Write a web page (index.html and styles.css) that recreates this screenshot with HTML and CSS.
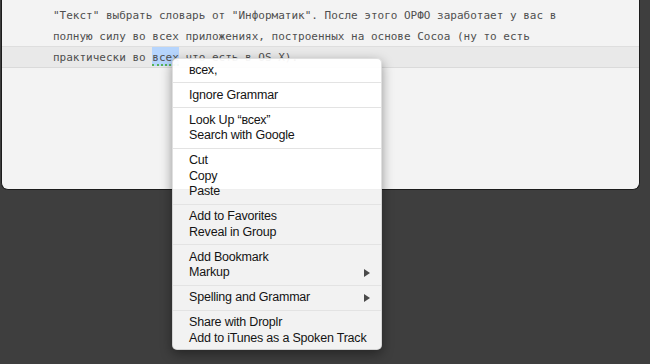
FILE: index.html
```html
<!DOCTYPE html>
<html lang="ru">
<head>
<meta charset="utf-8">
<link rel="stylesheet" href="styles.css">
</head>
<body>
<div class="window">
  <div class="doc">
    <div class="line">Чтобы это сделать, нужно в Системных настройках на вкладке "Язык и Текст"</div>
    <div class="line">"Текст" выбрать словарь от "Информатик". После этого ОРФО заработает у вас в</div>
    <div class="line">полную силу во всех приложениях, построенных на основе Cocoa (ну то есть</div>
    <div class="line current">практически во <span class="sel">всех</span> что есть в OS X).</div>
  </div>
</div>
<div class="menu">
  <div class="item">всех,</div>
  <div class="sep"></div>
  <div class="item">Ignore Grammar</div>
  <div class="sep"></div>
  <div class="item">Look Up “всех”</div>
  <div class="item">Search with Google</div>
  <div class="sep"></div>
  <div class="item">Cut</div>
  <div class="item">Copy</div>
  <div class="item">Paste</div>
  <div class="sep"></div>
  <div class="item">Add to Favorites</div>
  <div class="item">Reveal in Group</div>
  <div class="sep"></div>
  <div class="item">Add Bookmark</div>
  <div class="item sub">Markup<svg class="arrow" width="6" height="8" viewBox="0 0 6 8"><path d="M0 0L6 4L0 8Z"/></svg></div>
  <div class="sep"></div>
  <div class="item sub">Spelling and Grammar<svg class="arrow" width="6" height="8" viewBox="0 0 6 8"><path d="M0 0L6 4L0 8Z"/></svg></div>
  <div class="sep"></div>
  <div class="item">Share with Droplr</div>
  <div class="item">Add to iTunes as a Spoken Track</div>
</div>
</body>
</html>
```
FILE: styles.css
```css
html, body {
  margin: 0;
  padding: 0;
}
body {
  background: #3e3e3e;
  width: 650px;
  height: 364px;
  overflow: hidden;
  position: relative;
}
.window {
  margin-left: 1px;
  width: 637px;
  height: 189px;
  background: #f3f3f3;
  border: 1px solid #1c1c1c;
  border-top: none;
  border-radius: 0 0 7px 7px;
  overflow: hidden;
}
.doc {
  margin-top: -16px;
  font-family: "DejaVu Sans Mono", monospace;
  font-size: 11px;
  color: #4f4f4f;
}
.line {
  height: 21px;
  line-height: 21px;
  padding-left: 51px;
  white-space: nowrap;
}
.line.current {
  background: #e9e9e9;
  box-shadow: 0 -1px 0 #dedede, inset 0 -1px 0 #dadada;
}
.sel {
  background: #b6d5fd;
  padding-top: 4px;
  border-bottom: 2px dotted #58b458;
}
.menu {
  position: absolute;
  left: 172px;
  top: 58px;
  width: 210px;
  box-sizing: border-box;
  padding: 3.5px 0 3px;
  background: rgba(255, 255, 255, 0.935);
  border: 1px solid rgba(0, 0, 0, 0.12);
  border-radius: 5px;
  box-shadow: 0 4px 12px rgba(0, 0, 0, 0.4);
  font-family: "Liberation Sans", Arial, sans-serif;
  font-size: 12.5px;
  letter-spacing: -0.2px;
  color: #141414;
}
.item {
  height: 15.5px;
  line-height: 15.5px;
  padding-left: 16px;
  padding-right: 11px;
  white-space: nowrap;
}
.item.sub {
  display: flex;
  align-items: center;
  justify-content: space-between;
}
.arrow {
  fill: #4a4a4a;
}
.sep {
  height: 1px;
  margin: 4.25px 0;
  background: #e3e3e3;
}
```
